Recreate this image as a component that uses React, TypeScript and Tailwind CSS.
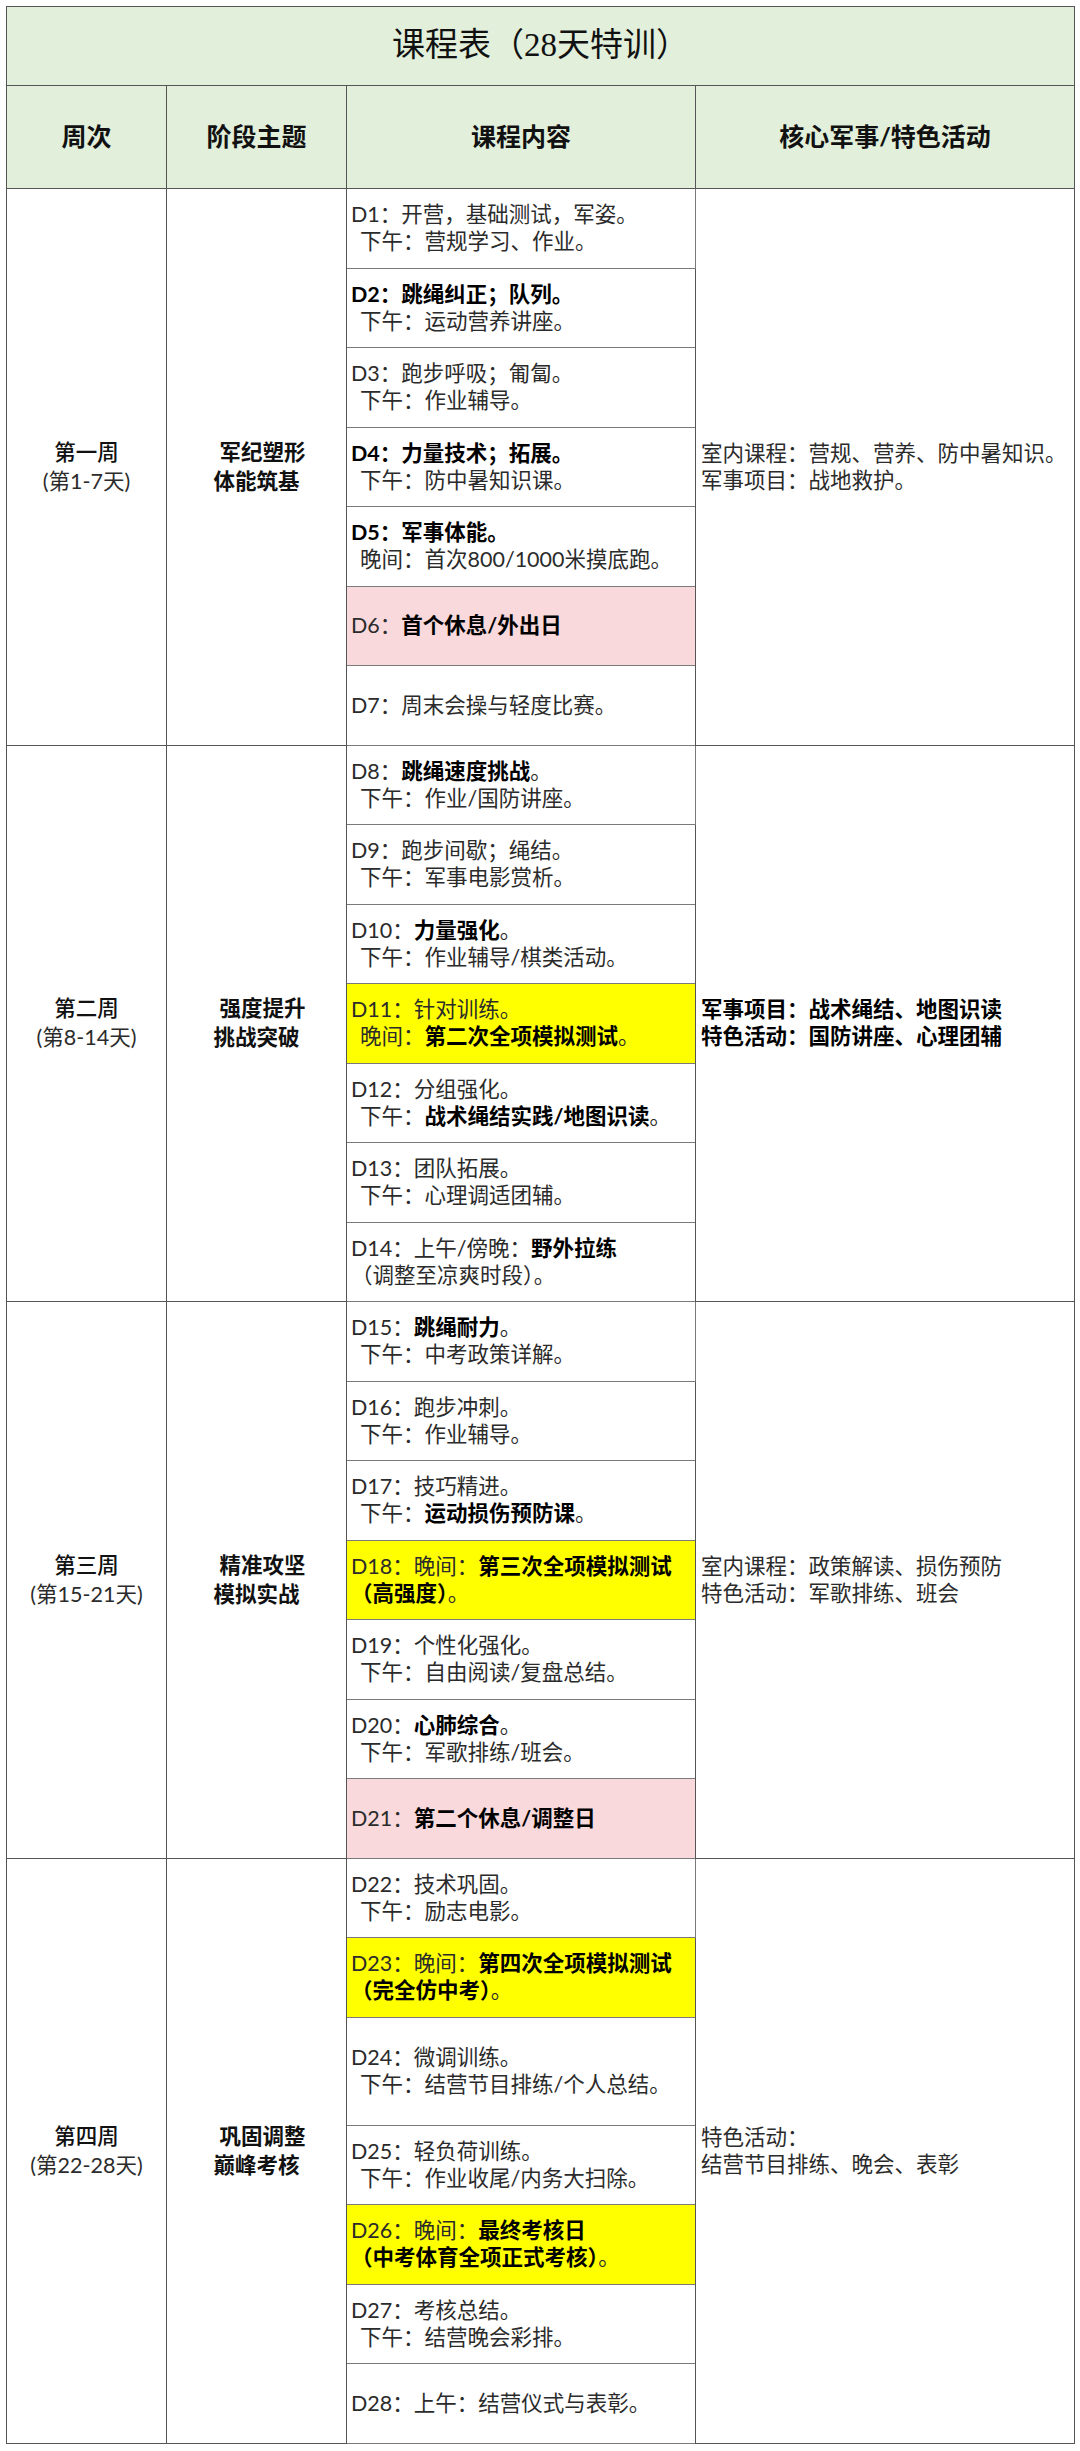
import React from "react";

type Day = {
  lines: string[];
  bg?: "pink" | "yellow";
  tall?: boolean;
};

type Week = {
  name: string;
  range: string;
  theme: string[];
  notes: string[];
  notesBold?: boolean;
  days: Day[];
};

const weeks: Week[] = [
  {
    name: "第一周",
    range: "(第1-7天)",
    theme: ["军纪塑形", "体能筑基"],
    notes: ["室内课程：营规、营养、防中暑知识。", "军事项目：战地救护。"],
    days: [
      { lines: ["D1：开营，基础测试，军姿。", " 下午：营规学习、作业。"] },
      { lines: ["**D2：跳绳纠正；队列。**", " 下午：运动营养讲座。"] },
      { lines: ["D3：跑步呼吸；匍匐。", " 下午：作业辅导。"] },
      { lines: ["**D4：力量技术；拓展。**", " 下午：防中暑知识课。"] },
      { lines: ["**D5：军事体能。**", " 晚间：首次800/1000米摸底跑。"] },
      { lines: ["D6：**首个休息/外出日**"], bg: "pink" },
      { lines: ["D7：周末会操与轻度比赛。"] },
    ],
  },
  {
    name: "第二周",
    range: "(第8-14天)",
    theme: ["强度提升", "挑战突破"],
    notes: ["军事项目：战术绳结、地图识读", "特色活动：国防讲座、心理团辅"],
    notesBold: true,
    days: [
      { lines: ["D8：**跳绳速度挑战**。", " 下午：作业/国防讲座。"] },
      { lines: ["D9：跑步间歇；绳结。", " 下午：军事电影赏析。"] },
      { lines: ["D10：**力量强化**。", " 下午：作业辅导/棋类活动。"] },
      { lines: ["D11：针对训练。", " 晚间：**第二次全项模拟测试**。"], bg: "yellow" },
      { lines: ["D12：分组强化。", " 下午：**战术绳结实践/地图识读**。"] },
      { lines: ["D13：团队拓展。", " 下午：心理调适团辅。"] },
      { lines: ["D14：上午/傍晚：**野外拉练**", "（调整至凉爽时段）。"] },
    ],
  },
  {
    name: "第三周",
    range: "(第15-21天)",
    theme: ["精准攻坚", "模拟实战"],
    notes: ["室内课程：政策解读、损伤预防", "特色活动：军歌排练、班会"],
    days: [
      { lines: ["D15：**跳绳耐力**。", " 下午：中考政策详解。"] },
      { lines: ["D16：跑步冲刺。", " 下午：作业辅导。"] },
      { lines: ["D17：技巧精进。", " 下午：**运动损伤预防课**。"] },
      { lines: ["D18：晚间：**第三次全项模拟测试**", "**（高强度）**。"], bg: "yellow" },
      { lines: ["D19：个性化强化。", " 下午：自由阅读/复盘总结。"] },
      { lines: ["D20：**心肺综合**。", " 下午：军歌排练/班会。"] },
      { lines: ["D21：**第二个休息/调整日**"], bg: "pink" },
    ],
  },
  {
    name: "第四周",
    range: "(第22-28天)",
    theme: ["巩固调整", "巅峰考核"],
    notes: ["特色活动：", "结营节目排练、晚会、表彰"],
    days: [
      { lines: ["D22：技术巩固。", " 下午：励志电影。"] },
      { lines: ["D23：晚间：**第四次全项模拟测试**", "**（完全仿中考）**。"], bg: "yellow" },
      { lines: ["D24：微调训练。", " 下午：结营节目排练/个人总结。"], tall: true },
      { lines: ["D25：轻负荷训练。", " 下午：作业收尾/内务大扫除。"] },
      { lines: ["D26：晚间：**最终考核日**", "**（中考体育全项正式考核）**。"], bg: "yellow" },
      { lines: ["D27：考核总结。", " 下午：结营晚会彩排。"] },
      { lines: ["D28：上午：结营仪式与表彰。"] },
    ],
  },
];

// "**text**" marks the bold parts of a line
function Line({ text }: { text: string }) {
  const indent = text.startsWith(" ");
  const parts = text.trimStart().split("**");
  return (
    <div className={indent ? "pl-[9px]" : ""}>
      {parts.map((p, i) =>
        i % 2 === 1 ? (
          <span key={i} className="font-bold text-black">
            {p}
          </span>
        ) : (
          <span key={i}>{p}</span>
        )
      )}
    </div>
  );
}

const font = "font-['Lato','Noto_Sans_CJK_SC',sans-serif]";

export default function App() {
  return (
    <div className={`bg-white p-[6px] ${font}`}>
      <table className="w-[1068px] table-fixed border-collapse border border-[#555]">
        <colgroup>
          <col className="w-[160px]" />
          <col className="w-[180px]" />
          <col className="w-[349px]" />
          <col className="w-[379px]" />
        </colgroup>
        <thead>
          <tr className="h-[79px]">
            <th
              colSpan={4}
              className="border border-[#555] bg-[#e2efda] text-center align-middle font-['Liberation_Serif','Noto_Sans_CJK_SC',serif] text-[33px] font-normal text-[#111]"
            >
              课程表（28天特训）
            </th>
          </tr>
          <tr className="h-[103px]">
            {["周次", "阶段主题", "课程内容", "核心军事/特色活动"].map((h) => (
              <th
                key={h}
                className="border border-[#555] bg-[#e2efda] text-center align-middle text-[25px] font-bold text-[#111]"
              >
                {h}
              </th>
            ))}
          </tr>
        </thead>
        <tbody className="text-[21.5px] leading-[27px] text-[#2b2b2b]">
          {weeks.map((w) =>
            w.days.map((d, i) => (
              <tr key={d.lines[0]} className={d.tall ? "h-[108px]" : "h-[79.5px]"}>
                {i === 0 && (
                  <>
                    <td
                      rowSpan={w.days.length}
                      className="border border-[#555] text-center align-middle leading-[29px]"
                    >
                      <div className="font-medium text-[#111]">{w.name}</div>
                      <div>{w.range}</div>
                    </td>
                    <td
                      rowSpan={w.days.length}
                      className="border border-[#555] text-center align-middle font-bold leading-[29px] text-[#111]"
                    >
                      <div className="ml-3">{w.theme[0]}</div>
                      <div>{w.theme[1]}</div>
                    </td>
                  </>
                )}
                <td
                  className={`border border-[#7a7a7a] pl-1 align-middle ${
                    d.bg === "pink" ? "bg-[#f9d9dc]" : d.bg === "yellow" ? "bg-[#ffff00]" : ""
                  }`}
                >
                  {d.lines.map((l) => (
                    <Line key={l} text={l} />
                  ))}
                </td>
                {i === 0 && (
                  <td
                    rowSpan={w.days.length}
                    className={`border border-[#555] pl-[5px] align-middle ${
                      w.notesBold ? "font-bold text-black" : ""
                    }`}
                  >
                    {w.notes.map((n) => (
                      <div key={n}>{n}</div>
                    ))}
                  </td>
                )}
              </tr>
            ))
          )}
        </tbody>
      </table>
    </div>
  );
}
